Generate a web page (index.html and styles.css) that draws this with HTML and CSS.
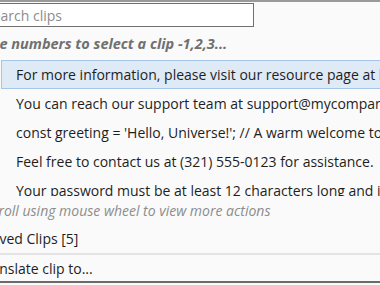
FILE: index.html
```
<!DOCTYPE html>
<html lang="en">
<head>
    <meta charset="UTF-8">
    <meta name="viewport" content="width=device-width, initial-scale=1.0">
    <title>Clip Menu</title>
    <link rel="stylesheet" href="styles.css">
</head>
<body>
    <div class="menu">
        <div class="search-bar">
            <input type="text" class="search" placeholder="Search clips">
        </div>
        <div class="hint">Type the numbers to select a clip -1,2,3...</div>
        <ul class="clips">
            <li class="clip selected">For more information, please visit our resource page at https://www.example.com/resources</li>
            <li class="clip">You can reach our support team at support@mycompany.com for any questions.</li>
            <li class="clip">const greeting = 'Hello, Universe!'; // A warm welcome to everyone</li>
            <li class="clip">Feel free to contact us at (321) 555-0123 for assistance.</li>
            <li class="clip">Your password must be at least 12 characters long and include a number.</li>
        </ul>
        <div class="scroll-hint">Scroll using mouse wheel to view more actions</div>
        <div class="action saved">Saved Clips [5]</div>
        <div class="action translate">Translate clip to...</div>
    </div>
</body>
</html>
```

FILE: styles.css
```
body {
    margin: 0;
    background-color: #fafafa;
    font-family: "Open Sans", "Noto Sans", sans-serif;
    overflow: hidden;
    width: 380px;
    height: 285px;
}
.menu {
    margin-left: -60px;
    width: 480px;
    height: 283px;
    border-top: 2px solid #9a9a9a;
    border-bottom: 2px solid #6a6a6a;
    box-sizing: border-box;
    display: flex;
    flex-direction: column;
}
.search-bar {
    height: 25px;
    padding-top: 1px;
    box-sizing: border-box;
}
.search {
    display: block;
    margin: 0 0 0 36px;
    width: 278px;
    height: 24px;
    box-sizing: border-box;
    border: 1px solid #707070;
    background-color: #fff;
    padding: 0 0 0 8px;
    font-family: inherit;
    font-size: 14px;
    outline: none;
}
.search::placeholder {
    color: #8c8c8c;
}
.hint {
    height: 33px;
    line-height: 33px;
    padding-left: 9px;
    font-size: 14.5px;
    font-weight: bold;
    font-style: italic;
    color: #707070;
    white-space: nowrap;
}
.clips {
    list-style: none;
    margin: 0;
    padding: 0;
    height: 137px;
    overflow: hidden;
}
.clip {
    height: 29px;
    line-height: 29px;
    padding-left: 76px;
    font-size: 14px;
    color: #1e1e1e;
    white-space: nowrap;
    overflow: hidden;
    box-sizing: border-box;
}
.clip.selected {
    margin-left: 61px;
    padding-left: 14px;
    line-height: 27px;
    background-color: #dfeaf7;
    border: 1px solid #a6c6e8;
}
.scroll-hint {
    height: 29px;
    line-height: 29px;
    padding-left: 45px;
    font-size: 14px;
    font-style: italic;
    color: #8c8c8c;
    white-space: nowrap;
}
.action {
    height: 28px;
    line-height: 28px;
    font-size: 14px;
    color: #1e1e1e;
    white-space: nowrap;
    box-sizing: border-box;
}
.saved {
    padding-left: 44px;
}
.translate {
    padding-left: 38px;
    border-top: 2px solid #e4e4e4;
    flex: 1;
}
```
